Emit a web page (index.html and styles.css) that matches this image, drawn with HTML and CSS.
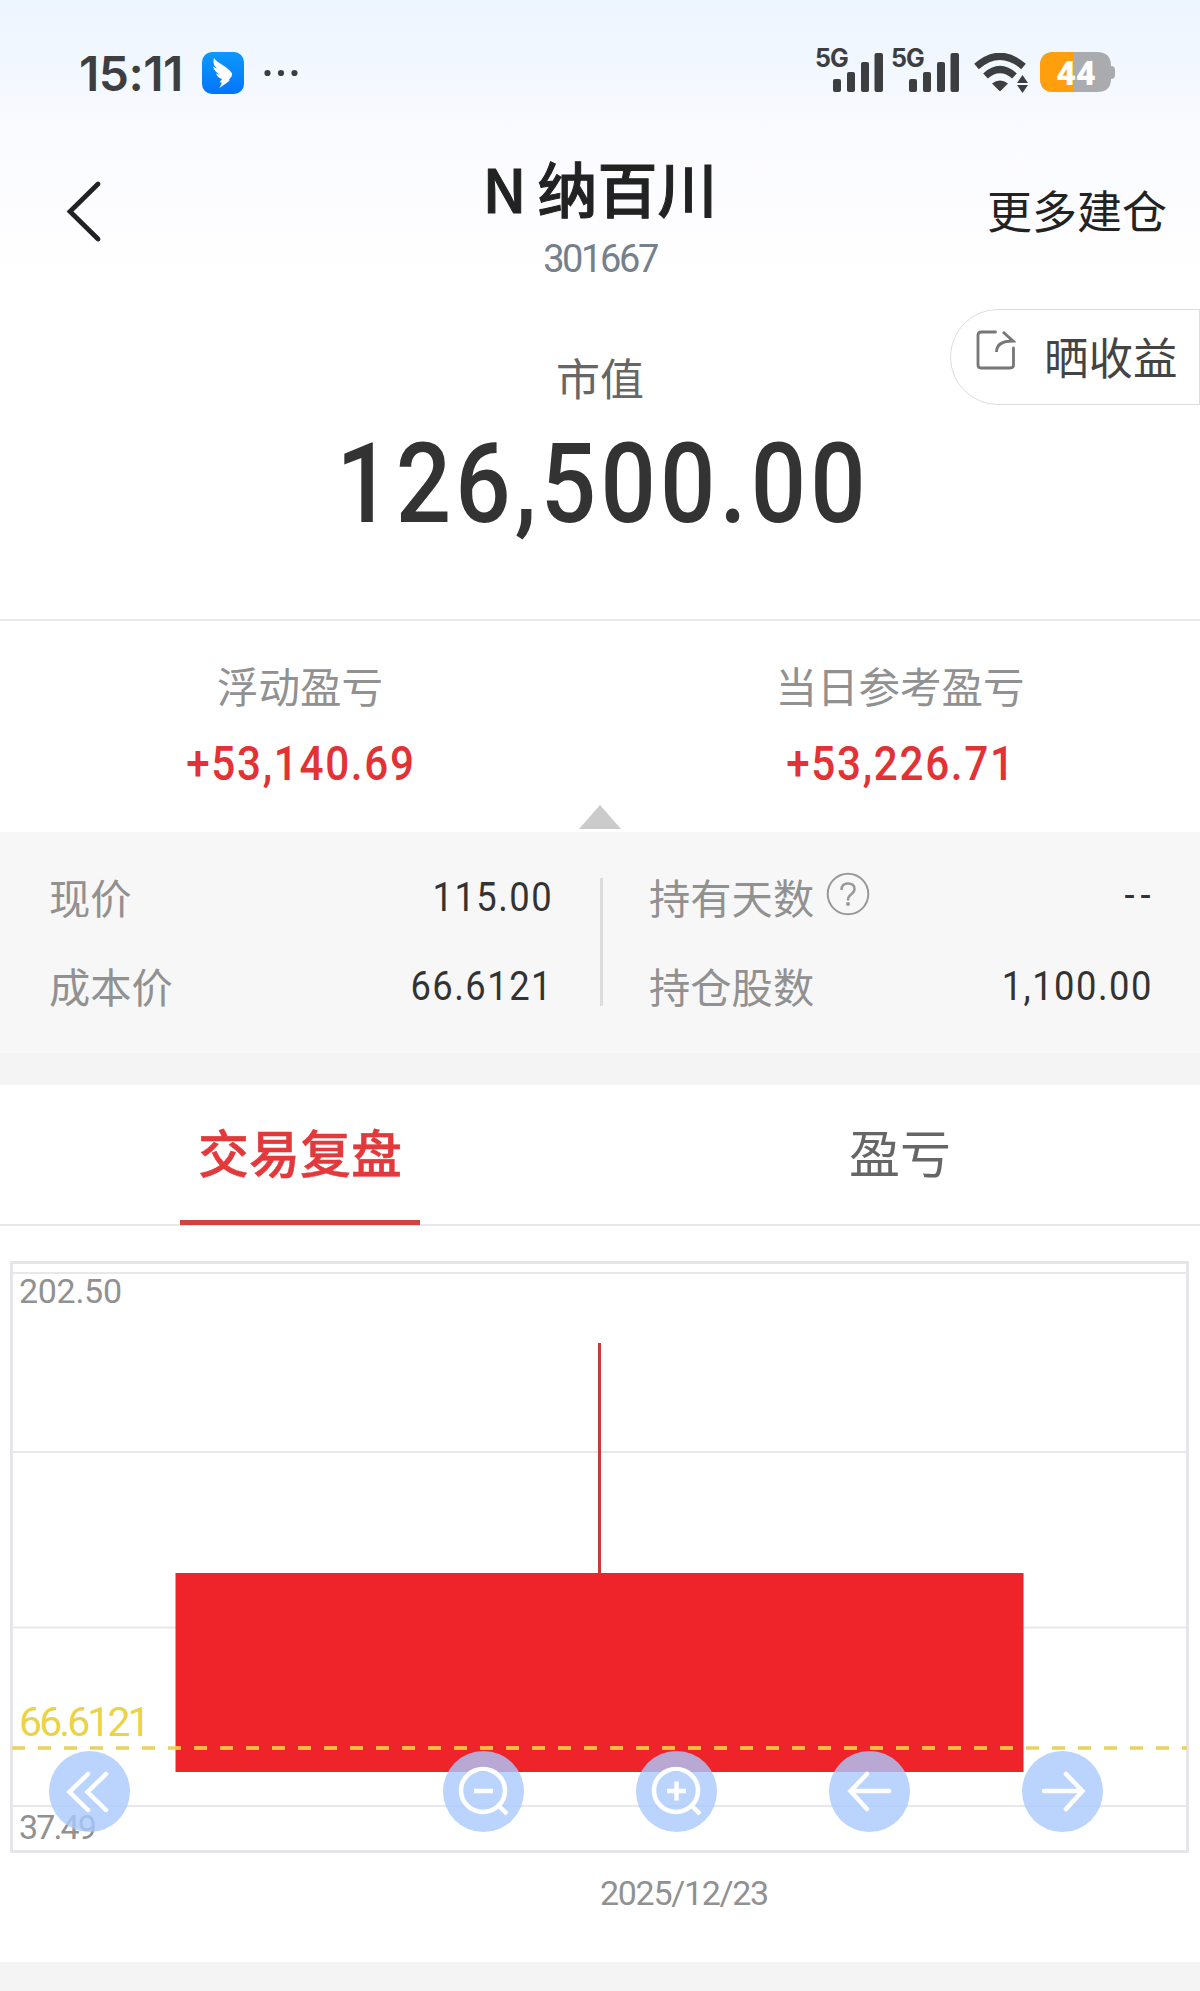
FILE: index.html
```html
<!DOCTYPE html>
<html lang="zh-CN">

<head>
  <meta charset="UTF-8">
  <meta name="viewport" content="width=device-width, initial-scale=1.0">
  <title>N纳百川 301667</title>
  <link rel="stylesheet" href="styles.css">
</head>

<body>

  <header class="header">
    <div class="status-bar">
      <div class="status-left">
        <span class="time">15:11</span>
        <svg class="app-icon" width="42" height="42" viewBox="0 0 42 42">
          <defs>
            <linearGradient id="wing" x1="0" y1="0" x2="0" y2="1">
              <stop offset="0" stop-color="#0d99fb" />
              <stop offset="1" stop-color="#0374fb" />
            </linearGradient>
          </defs>
          <rect width="42" height="42" rx="10" fill="url(#wing)" />
          <path d="M12 6 C15 11 23 13 29 20 Q31 22 29.500 24.500 L26.500 28.500 L28 28.500 L17.500 36 L20 30.500 L17.500 30.500 L20 27 Q16 26 14 21.500 L18 23 Q12 19 11 14.500 L15 17 Q10 12 12 6Z" fill="#fff" />
        </svg>
        <svg class="dots" width="34" height="8" viewBox="0 0 34 8" fill="#3d3e40">
          <circle cx="3.500" cy="4" r="3.100" />
          <circle cx="17" cy="4" r="3.100" />
          <circle cx="30.500" cy="4" r="3.100" />
        </svg>
      </div>
      <div class="status-right">
        <div class="signal">
          <span class="net">5G</span>
          <svg width="51" height="40" viewBox="0 0 51 40" fill="#3d3e40">
            <rect x="0" y="27" width="8" height="13" rx="2" />
            <rect x="14" y="20" width="8" height="20" rx="2" />
            <rect x="28" y="10" width="8" height="30" rx="2" />
            <rect x="41.500" y="1" width="8.500" height="39" rx="2" />
          </svg>
        </div>
        <div class="signal">
          <span class="net">5G</span>
          <svg width="51" height="40" viewBox="0 0 51 40" fill="#3d3e40">
            <rect x="0" y="27" width="8" height="13" rx="2" />
            <rect x="14" y="20" width="8" height="20" rx="2" />
            <rect x="28" y="10" width="8" height="30" rx="2" />
            <rect x="41.500" y="1" width="8.500" height="39" rx="2" />
          </svg>
        </div>
        <svg class="wifi" width="54" height="40" viewBox="0 0 54 40">
          <path d="M2.500 13.500 Q26 -7 49.500 13.500" fill="none" stroke="#3d3e40" stroke-width="7" />
          <path d="M11.500 23 Q26 10 40.500 23" fill="none" stroke="#3d3e40" stroke-width="7" />
          <path d="M18 30.500 Q26 24.500 34 30.500 L27 37.500 Q26 38.500 25 37.500Z" fill="#3d3e40" />
          <path d="M48.500 22 L54 30 H43Z M43 32 H54 L48.500 40Z" fill="#3d3e40" />
        </svg>
        <div class="battery">
          <svg width="75" height="40" viewBox="0 0 75 40">
            <path d="M14 0 H57 Q71 0 71 14 Q75 14 75 18 V23 Q75 27 71 27 Q71 40 57 40 H14 Q0 40 0 26 V14 Q0 0 14 0Z" fill="#a9abae" />
            <path d="M34 0 H14 Q0 0 0 14 V26 Q0 40 14 40 H34Z" fill="#ff9f0d" />
          </svg>
          <span class="battery-level">44</span>
        </div>
      </div>
    </div>

    <div class="nav-bar">
      <svg class="back" width="36" height="64" viewBox="0 0 36 64">
        <path d="M32 4 L4 31.500 L32 59" fill="none" stroke="#222" stroke-width="4.800" stroke-linecap="round" />
      </svg>
      <div class="nav-title">
        <div class="stock-name"><span class="stock-flag">N</span>纳百川</div>
        <div class="stock-code">301667</div>
      </div>
      <div class="more">更多建仓</div>
    </div>
  </header>

  <section class="market">
    <div class="share">
      <svg class="share-icon" width="40" height="40" viewBox="0 0 40 40" fill="none" stroke="#777" stroke-width="2.800">
        <path d="M19.500 2 H5 Q2 2 2 5 V35 Q2 38 5 38 H34 Q37.500 38 37.500 35 V18" stroke-linecap="round" />
        <path d="M20.500 22 Q20.500 11 37 11 L27 2" />
      </svg>
      <span>晒收益</span>
    </div>
    <div class="market-label">市值</div>
    <div class="market-value">126,500.00</div>
  </section>

  <section class="profit">
    <div class="profit-item">
      <div class="profit-label">浮动盈亏</div>
      <div class="profit-value">+53,140.69</div>
    </div>
    <div class="profit-item">
      <div class="profit-label">当日参考盈亏</div>
      <div class="profit-value">+53,226.71</div>
    </div>
    <div class="arrow-up"></div>
  </section>

  <section class="details">
    <div class="detail-col">
      <div class="detail-row"><span class="label">现价</span><span class="value">115.00</span></div>
      <div class="detail-row"><span class="label">成本价</span><span class="value">66.6121</span></div>
    </div>
    <div class="detail-line"></div>
    <div class="detail-col">
      <div class="detail-row">
        <span class="label">持有天数</span>
        <svg class="help" width="44" height="44" viewBox="0 0 44 44" fill="none" stroke="#999" stroke-width="2">
          <circle cx="22" cy="22" r="20.300" />
          <path d="M15.500 18 Q15.500 11.500 22 11.500 Q28.500 11.500 28.500 17 Q28.500 20 25 22.500 Q22 24.500 22 28.500" stroke-width="2.500" />
          <circle cx="22" cy="32" r="1" />
        </svg>
        <span class="value empty">--</span>
      </div>
      <div class="detail-row"><span class="label">持仓股数</span><span class="value">1,100.00</span></div>
    </div>
  </section>

  <div class="spacer"></div>

  <nav class="tabs">
    <div class="tab active">交易复盘</div>
    <div class="tab">盈亏</div>
  </nav>

  <section class="chart">
    <div class="plot">
      <svg class="candles" width="1179" height="592" viewBox="0 0 1179 592">
        <!-- frame and grid -->
        <rect x="1.500" y="1.500" width="1176" height="589" fill="none" stroke="#e6e6ea" stroke-width="3" />
        <path d="M3 12 H1176 M3 191 H1176 M3 366.500 H1176 M3 545 H1176" stroke="#e6e8ea" stroke-width="2" />
        <!-- candle -->
        <rect x="588" y="82" width="3" height="231" fill="#c93a3a" />
        <rect x="165.500" y="312" width="848" height="199" fill="#ef242a" />
        <!-- cost line -->
        <path d="M2 487 H1177" stroke="#e9d261" stroke-width="3.500" stroke-dasharray="13 13" />
        <path d="M165.500 487 H1013.500" stroke="#fcbb40" stroke-width="3.500" stroke-dasharray="13 13" stroke-dashoffset="7.500" />
        <text class="axis" x="9" y="42">202.50</text>
        <text class="axis low" x="9" y="578">37.49</text>
        <text class="cost" x="9" y="475">66.6121</text>
      </svg>
      <div class="tools">
        <svg class="tool tool-first" viewBox="0 0 81 81">
          <path d="M39 23 L20.500 41 L39 59 M57 23 L38.500 41 L57 59" stroke-linecap="round" />
        </svg>
        <svg class="tool" viewBox="0 0 81 81">
          <ellipse cx="40" cy="39.500" rx="22" ry="21.500" />
          <path d="M31 40 H50" stroke-width="4.500" />
          <path d="M55 54 L64 63" />
        </svg>
        <svg class="tool" viewBox="0 0 81 81">
          <ellipse cx="40" cy="39.500" rx="22" ry="21.500" />
          <path d="M31 40 H50 M40.500 30.500 V49.500" stroke-width="4.500" />
          <path d="M55 54 L64 63" />
        </svg>
        <svg class="tool" viewBox="0 0 81 81">
          <path d="M60 40 H22 M38 23 L21.500 40 L38 58" stroke-linecap="round" />
        </svg>
        <svg class="tool" viewBox="0 0 81 81">
          <path d="M22 40 H60 M44 23 L60.500 40 L44 58" stroke-linecap="round" />
        </svg>
      </div>
    </div>
    <div class="date">2025/12/23</div>
  </section>

  <div class="bottom"></div>

</body>

</html>
```

FILE: styles.css
```css
* {
  box-sizing: border-box;
}

body {
  margin: 0;
  width: 1200px;
  height: 1991px;
  overflow: hidden;
  background-color: #fff;
  font-family: Roboto, "Noto Sans CJK SC", sans-serif;
  color: #222;
}

svg {
  display: block;
  flex: none;
}

.header {
  height: 300px;
  background: linear-gradient(#edf5ff 0, #f4f8ff 80px, #fafbff 140px, #fdfdff 220px, #fff 280px);
}

/* status bar */
.status-bar {
  display: flex;
  justify-content: space-between;
  height: 116px;
  padding: 52px 85px 0 79px;
}

.status-left,
.status-right {
  display: flex;
  height: 42px;
}

.time {
  width: 123px;
  font-family: Inter, sans-serif;
  font-size: 48px;
  font-weight: 600;
  line-height: 44px;
  letter-spacing: -0.500px;
  color: #3d3e40;
}

.dots {
  margin: 17px 0 0 20px;
}

.signal {
  display: flex;
  position: relative;
  width: 76px;
  padding-left: 17px;
}

.net {
  position: absolute;
  left: -1px;
  top: -6px;
  font-family: Inter, sans-serif;
  font-size: 25px;
  font-weight: 700;
  line-height: 24px;
  letter-spacing: -1px;
  color: #3d3e40;
}

.wifi {
  margin: 1px 12px 0 6px;
}

.battery {
  position: relative;
}

.battery-level {
  position: absolute;
  left: 0;
  top: 0;
  width: 71px;
  text-align: center;
  font-family: Roboto, sans-serif;
  font-size: 34px;
  font-weight: 900;
  line-height: 42px;
  padding-left: 1px;
  color: #fff;
}

/* title */
.nav-bar {
  display: grid;
  grid-template-columns: 300px 600px 300px;
  height: 184px;
}

.back {
  margin: 64px 0 0 66px;
}

.nav-title {
  text-align: center;
}

.stock-name {
  height: 118px;
  padding-top: 26px;
  font-size: 60px;
  line-height: 90px;
  font-weight: 500;
  font-family: "Noto Sans CJK SC", sans-serif;
  -webkit-text-stroke: 1px #222;
}

.stock-flag {
  margin-right: 11px;
}

.stock-code {
  padding-top: 5px;
  font-size: 38px;
  line-height: 40px;
  letter-spacing: -2.400px;
  color: #75808a;
}

.more {
  padding: 68px 33px 0 0;
  text-align: right;
  font-size: 45px;
  line-height: 60px;
}

/* market value */
.market {
  position: relative;
  height: 321px;
  padding-top: 51px;
  text-align: center;
  border-bottom: 2px solid #e8e8e8;
}

.share {
  position: absolute;
  right: 0;
  top: 9px;
  display: flex;
  width: 250px;
  height: 96px;
  padding: 18px 0 0 25px;
  border: 1px solid #ddd;
  border-radius: 48px 0 0 48px;
  font-size: 44.500px;
  line-height: 65px;
  color: #444;
}

.share-icon {
  margin: 2px 28px 0 0;
}

.market-label {
  font-size: 44px;
  line-height: 60px;
  color: #666;
}

/* tall narrow digits */
.market-value {
  margin-top: 17px;
  font-size: 112px;
  font-weight: 500;
  line-height: 112px;
  letter-spacing: 4.800px;
  text-indent: 7px;
  transform: scaleX(0.87);
  color: #333;
}

/* profit */
.profit {
  display: flex;
  position: relative;
  height: 211px;
}

.profit-item {
  width: 600px;
  padding-top: 38px;
  text-align: center;
}

.profit-label {
  font-size: 41.500px;
  line-height: 60px;
  color: #919191;
}

.profit-value {
  margin-top: 17px;
  font-size: 48px;
  font-weight: 500;
  line-height: 56px;
  letter-spacing: 1.900px;
  text-indent: 2px;
  transform: scaleX(0.88);
  color: #e23236;
}

.arrow-up {
  position: absolute;
  left: 579px;
  bottom: 3px;
  border: 21px solid transparent;
  border-top: 0;
  border-bottom: 24px solid #cbcbcb;
}

/* details */
.details {
  display: flex;
  height: 221px;
  padding-top: 46px;
  background-color: #f7f7f7;
}

.detail-col {
  width: 600px;
  padding: 0 47px 0 49px;
}

.detail-line {
  width: 3px;
  height: 128px;
  margin-right: -3px;
  background-color: #ddd;
}

.detail-row {
  display: flex;
  height: 89px;
  font-size: 41.300px;
  line-height: 40px;
}

.label {
  padding-top: 2px;
  color: #919191;
}

.help {
  margin: -6px 0 0 12px;
}

.value {
  margin-top: -1px;
  margin-left: auto;
  letter-spacing: 1.700px;
  transform: scaleX(0.88);
  transform-origin: right;
  color: #333;
}

.empty {
  margin-top: -3px;
  margin-right: -4px;
  letter-spacing: 7px;
}

.spacer {
  height: 32px;
  background-color: #f4f4f4;
}

/* tabs */
.tabs {
  display: flex;
  height: 141px;
  border-bottom: 2px solid #e8e8e8;
}

.tab {
  width: 240px;
  margin: 0 180px;
  height: 140px;
  text-align: center;
  font-size: 51px;
  line-height: 142px;
  white-space: nowrap;
  color: #666;
}

.tab.active {
  font-weight: 500;
  color: #e3393c;
  border-bottom: 5px solid #d34141;
  -webkit-text-stroke: 0.500px #e3393c;
}

/* chart */
.chart {
  height: 736px;
  padding: 35px 11px 0 10px;
}

.plot {
  position: relative;
}

.axis {
  font-size: 34px;
  letter-spacing: -0.300px;
  fill: #919191;
}

.low {
  letter-spacing: -1.900px;
}

.cost {
  font-size: 41px;
  letter-spacing: -2.900px;
  fill: #ead345;
}

.tools {
  position: absolute;
  left: 39px;
  top: 490px;
  display: flex;
  gap: 112px;
}

.tool {
  width: 81px;
  height: 81px;
  border-radius: 50%;
  background-color: rgba(170, 201, 254, 0.8);
  fill: none;
  stroke: #fff;
  stroke-width: 4.500px;
}

.tool-first {
  margin-right: 201px;
}

.date {
  padding: 20px 0 0 590px;
  font-size: 34px;
  line-height: 40px;
  letter-spacing: -1.300px;
  color: #919191;
}

.bottom {
  height: 29px;
  background-color: #f4f4f4;
}
```
